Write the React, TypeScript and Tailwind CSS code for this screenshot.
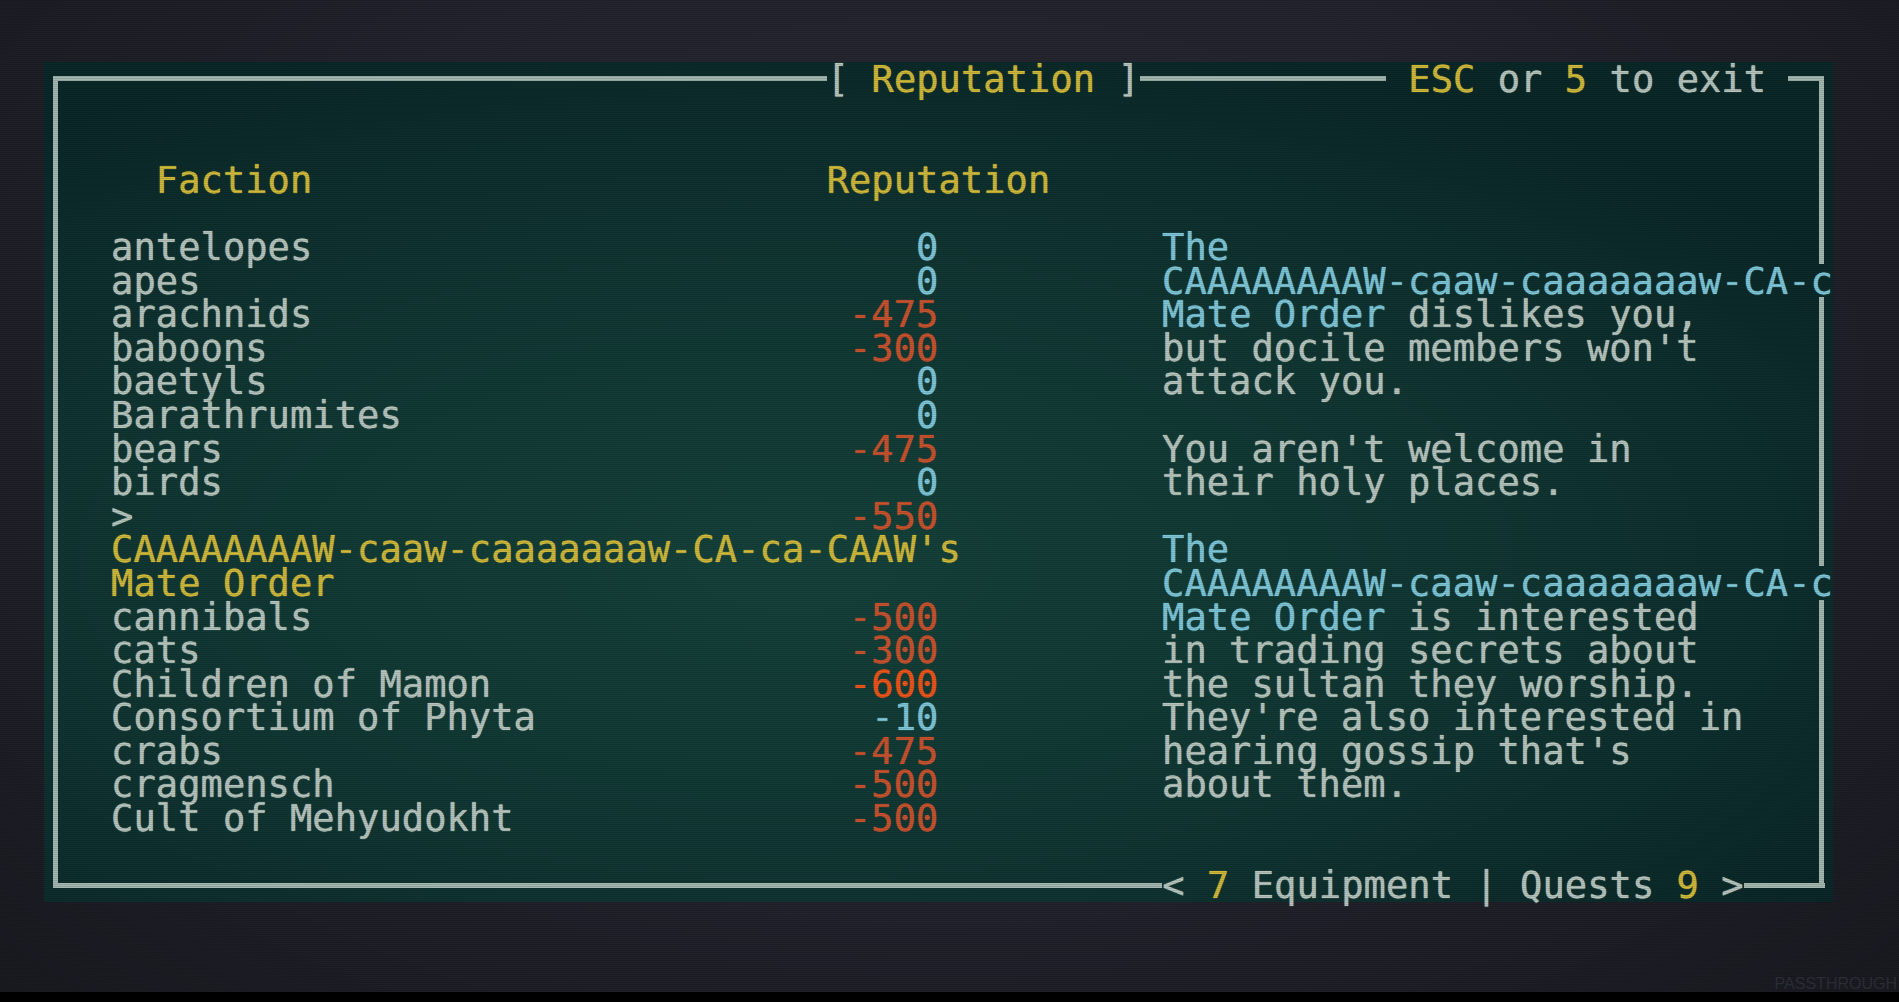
import React from 'react'

const COLS = 80
const ROWS = 25
const CW = 22.366

type Tone = 'g' | 'y' | 'c' | 'r' | 'o'
type Cell = { ch: string; tone: Tone }

const toneClass: Record<Tone, string> = {
  g: 'text-[#b6c6be]',
  y: 'text-[#cfba3c]',
  c: 'text-[#7ec7d8]',
  r: 'text-[#c8532f]',
  o: 'text-[#ee551a]',
}

const factions: [string, string, Tone][] = [
  ['antelopes', '0', 'c'],
  ['apes', '0', 'c'],
  ['arachnids', '-475', 'r'],
  ['baboons', '-300', 'r'],
  ['baetyls', '0', 'c'],
  ['Barathrumites', '0', 'c'],
  ['bears', '-475', 'r'],
  ['birds', '0', 'c'],
  ['>', '-550', 'r'],
  ["CAAAAAAAAW-caaw-caaaaaaaw-CA-ca-CAAW's", '', 'y'],
  ['Mate Order', '', 'y'],
  ['cannibals', '-500', 'r'],
  ['cats', '-300', 'r'],
  ['Children of Mamon', '-600', 'o'],
  ['Consortium of Phyta', '-10', 'c'],
  ['crabs', '-475', 'r'],
  ['cragmensch', '-500', 'r'],
  ['Cult of Mehyudokht', '-500', 'r'],
]

const description: [string, Tone][][] = [
  [['The', 'c']],
  [['CAAAAAAAAW-caaw-caaaaaaaw-CA-c', 'c']],
  [['Mate Order', 'c'], [' dislikes you,', 'g']],
  [["but docile members won't", 'g']],
  [['attack you.', 'g']],
  [],
  [["You aren't welcome in", 'g']],
  [['their holy places.', 'g']],
  [],
  [['The', 'c']],
  [['CAAAAAAAAW-caaw-caaaaaaaw-CA-c', 'c']],
  [['Mate Order', 'c'], [' is interested', 'g']],
  [['in trading secrets about', 'g']],
  [['the sultan they worship.', 'g']],
  [["They're also interested in", 'g']],
  [["hearing gossip that's", 'g']],
  [['about them.', 'g']],
]

// build the 80x25 character screen
function buildScreen(): Cell[][] {
  const buf: Cell[][] = Array.from({ length: ROWS }, () =>
    Array.from({ length: COLS }, () => ({ ch: ' ', tone: 'g' as Tone }))
  )
  const put = (r: number, c: number, text: string, tone: Tone = 'g') => {
    for (let i = 0; i < text.length && c + i < COLS; i++) {
      buf[r][c + i] = { ch: text[i], tone }
    }
  }

  // frame
  put(0, 0, '┌' + '─'.repeat(78) + '┐')
  for (let r = 1; r < ROWS - 1; r++) {
    put(r, 0, '│')
    put(r, 79, '│')
  }
  put(24, 0, '└' + '─'.repeat(78) + '┘')

  // title bar
  put(0, 35, '[ ')
  put(0, 37, 'Reputation', 'y')
  put(0, 47, ' ]')
  put(0, 60, ' ')
  put(0, 61, 'ESC', 'y')
  put(0, 64, ' or ')
  put(0, 68, '5', 'y')
  put(0, 69, ' to exit ')

  // footer
  put(24, 50, '< ')
  put(24, 52, '7', 'y')
  put(24, 53, ' Equipment | Quests ')
  put(24, 73, '9', 'y')
  put(24, 74, ' >')

  // headers
  put(3, 5, 'Faction', 'y')
  put(3, 35, 'Reputation', 'y')

  factions.forEach(([name, rep, tone], i) => {
    const r = 5 + i
    const nameTone: Tone = !rep ? 'y' : 'g'
    put(r, 3, name, nameTone)
    if (rep) put(r, 40 - rep.length, rep, tone)
  })

  description.forEach((segs, i) => {
    let c = 50
    segs.forEach(([text, tone]) => {
      put(5 + i, c, text, tone)
      c += text.length
    })
  })

  return buf
}

const BOX = '─│┌┐└┘'

function Box({ ch, n = 1 }: { ch: string; n?: number }) {
  if (ch === '─') {
    return (
      <div className="flex items-center shrink-0" style={{ width: n * CW }}>
        <div className="h-[5px] w-full bg-[#a3b8b0]" />
      </div>
    )
  }
  if (ch === '│') {
    return (
      <div className="flex justify-center shrink-0 w-[22.366px]">
        <div className="w-[5px] h-full bg-[#a3b8b0]" />
      </div>
    )
  }
  const top = ch === '└' || ch === '┘'
  const left = ch === '┐' || ch === '┘'
  return (
    <div className="relative shrink-0 w-[22.366px]">
      <div
        className={
          'absolute top-[calc(50%-2.5px)] h-[5px] bg-[#a3b8b0] ' +
          (left ? 'left-0 right-[calc(50%-2.5px)]' : 'left-[calc(50%-2.5px)] right-0')
        }
      />
      <div
        className={
          'absolute left-[calc(50%-2.5px)] w-[5px] bg-[#a3b8b0] ' +
          (top ? 'top-0 bottom-[calc(50%-2.5px)]' : 'top-[calc(50%-2.5px)] bottom-0')
        }
      />
    </div>
  )
}

function Row({ cells }: { cells: Cell[] }) {
  const parts: React.ReactNode[] = []
  let i = 0
  while (i < cells.length) {
    const cell = cells[i]
    if (BOX.includes(cell.ch)) {
      if (cell.ch === '─') {
        let j = i
        while (j < cells.length && cells[j].ch === '─') j++
        parts.push(<Box key={i} ch="─" n={j - i} />)
        i = j
      } else {
        parts.push(<Box key={i} ch={cell.ch} />)
        i++
      }
      continue
    }
    let j = i
    let text = ''
    while (j < cells.length && !BOX.includes(cells[j].ch) && cells[j].tone === cell.tone) {
      text += cells[j].ch
      j++
    }
    parts.push(
      <span
        key={i}
        className={
          'whitespace-pre shrink-0 leading-[35.6px] [text-shadow:0_0_1px_currentColor] ' +
          toneClass[cell.tone]
        }
      >
        {text}
      </span>
    )
    i = j
  }
  return <div className="flex h-[33.6px]">{parts}</div>
}

export default function App() {
  const screen = buildScreen()

  return (
    <div className="relative w-[1899px] h-[1002px] overflow-hidden flex flex-col bg-[radial-gradient(ellipse_at_50%_40%,#2b2c37_0%,#23242d_55%,#191a20_100%)]">
      <div className="pt-[62px] pl-[44px]">
        <div className="w-[1789px] h-[840px] bg-[radial-gradient(ellipse_70%_65%_at_42%_60%,#15433b_0%,#113733_55%,#0a2828_100%)] font-['DejaVu_Sans_Mono',monospace] text-[37.15px]">
          {screen.map((cells, r) => (
            <Row key={r} cells={cells} />
          ))}
        </div>
      </div>

      <div className="flex-1 flex items-end justify-end">
        <span className="mr-[2px] mb-[0px] font-['Liberation_Sans',sans-serif] text-[16px] leading-none text-[#2b2f37]">
          PASSTHROUGH
        </span>
      </div>
      <div className="h-[10px] bg-black" />

      {/* crt scanlines */}
      <div className="pointer-events-none absolute inset-0 bg-[repeating-linear-gradient(to_bottom,rgba(0,0,0,0.12)_0px,rgba(0,0,0,0.12)_1px,transparent_1px,transparent_2px)]" />
    </div>
  )
}
